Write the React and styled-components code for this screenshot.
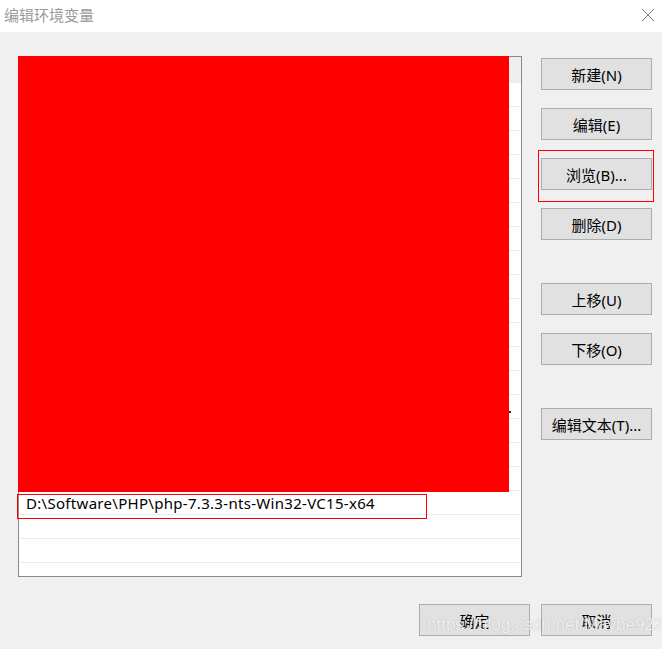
import React from 'react'
import styled, { createGlobalStyle } from 'styled-components'

const GlobalStyle = createGlobalStyle`
    html, body {
        margin: 0;
        padding: 0;
        background: #f0f0f0;
    }
    body {
        font-family: "Noto Sans", "Noto Sans CJK SC", sans-serif;
    }
`

const rows = Array.from({ length: 22 }, (_, i) => i)

function App() {
    return (
        <Window>
            <GlobalStyle />
            <TitleBar>
                <Title>编辑环境变量</Title>
                <CloseIcon viewBox="0 0 14 14">
                    <path d="M1 1 L13 13 M13 1 L1 13" stroke="#7a7a7a" strokeWidth="1" fill="none" />
                </CloseIcon>
            </TitleBar>
            <Body>
                <Main>
                    <List>
                        <RowArea>
                            <SelectedRow />
                            {rows.map(i => (
                                <Row key={i}>{i === 17 ? 'D:\\Software\\PHP\\php-7.3.3-nts-Win32-VC15-x64' : ''}</Row>
                            ))}
                        </RowArea>
                        <Redaction />
                        <Dot />
                        <Highlight />
                    </List>
                    <Buttons>
                        <Button>新建(N)</Button>
                        <Button $gap={18}>编辑(E)</Button>
                        <Marked>
                            <Button>浏览(B)...</Button>
                        </Marked>
                        <Button $gap={18}>删除(D)</Button>
                        <Button $gap={43}>上移(U)</Button>
                        <Button $gap={18}>下移(O)</Button>
                        <Button $gap={43}>编辑文本(T)...</Button>
                    </Buttons>
                </Main>
                <Footer>
                    <Button>确定</Button>
                    <Button>取消</Button>
                </Footer>
            </Body>
            <Watermark>https://blog.csdn.net/Maybe922</Watermark>
        </Window>
    )
}

export default App

const Window = styled.div`
    position: relative;
    width: 662px;
    height: 649px;
    display: flex;
    flex-direction: column;
    overflow: hidden;
`
const TitleBar = styled.div`
    height: 32px;
    background: #fff;
    display: flex;
    align-items: center;
    justify-content: space-between;
    padding: 0 7px 3px 4px;
    box-sizing: border-box;
`
const Title = styled.span`
    font-size: 15px;
    color: #9a9a9a;
    font-family: "Noto Sans CJK SC", sans-serif;
`
const CloseIcon = styled.svg`
    width: 14px;
    height: 14px;
`
const Body = styled.div`
    flex: 1;
    background: #f0f0f0;
    padding: 24px 10px 0 18px;
    display: flex;
    flex-direction: column;
`
const Main = styled.div`
    display: flex;
    align-items: flex-start;
`
const List = styled.div`
    position: relative;
    width: 504px;
    height: 521px;
    box-sizing: border-box;
    border: 1px solid #858a90;
    background: #fff;
`
const RowArea = styled.div`
    height: 100%;
    overflow: hidden;
    display: flex;
    flex-direction: column;
`
const SelectedRow = styled.div`
    height: 25px;
    flex: none;
    background: #eeeeee;
`
const Row = styled.div`
    height: 24px;
    flex: none;
    box-sizing: border-box;
    border-top: 1px solid #ebebeb;
    margin: 0 1px;
    padding-left: 6px;
    display: flex;
    align-items: center;
    font-size: 15px;
    letter-spacing: 0.3px;
    color: #000;
    white-space: nowrap;
`
const Redaction = styled.div`
    position: absolute;
    left: -1px;
    top: -1px;
    width: 491px;
    height: 436px;
    background: #ff0000;
`
const Dot = styled.div`
    position: absolute;
    left: 490px;
    top: 354px;
    width: 2px;
    height: 2px;
    background: #333;
`
const Highlight = styled.div`
    position: absolute;
    left: -2px;
    top: 437px;
    width: 410px;
    height: 25px;
    border: 1px solid #ff0000;
    box-sizing: border-box;
`
const Buttons = styled.div`
    display: flex;
    flex-direction: column;
    margin-left: 19px;
    margin-top: 2px;
`
const Button = styled.div`
    width: 111px;
    height: 32px;
    flex: none;
    box-sizing: border-box;
    margin-top: ${p => p.$gap || 0}px;
    border: 1px solid #adadad;
    background: #e1e1e1;
    display: flex;
    align-items: center;
    justify-content: center;
    font-size: 15px;
    color: #000;
    white-space: nowrap;
`
const Marked = styled.div`
    position: relative;
    margin-top: 18px;
    &::after {
        content: '';
        position: absolute;
        left: -3px;
        right: -2px;
        top: -8px;
        bottom: -12px;
        border: 1px solid #ff0000;
    }
`
const Footer = styled.div`
    display: flex;
    justify-content: flex-end;
    gap: 11px;
    margin-top: 27px;
`
const Watermark = styled.div`
    position: absolute;
    left: 427px;
    top: 615px;
    font-size: 17px;
    color: rgba(255, 255, 255, 0.85);
    text-shadow: 0 0 1px rgba(120, 120, 120, 0.6);
    font-family: "Liberation Sans", sans-serif;
    white-space: nowrap;
`
